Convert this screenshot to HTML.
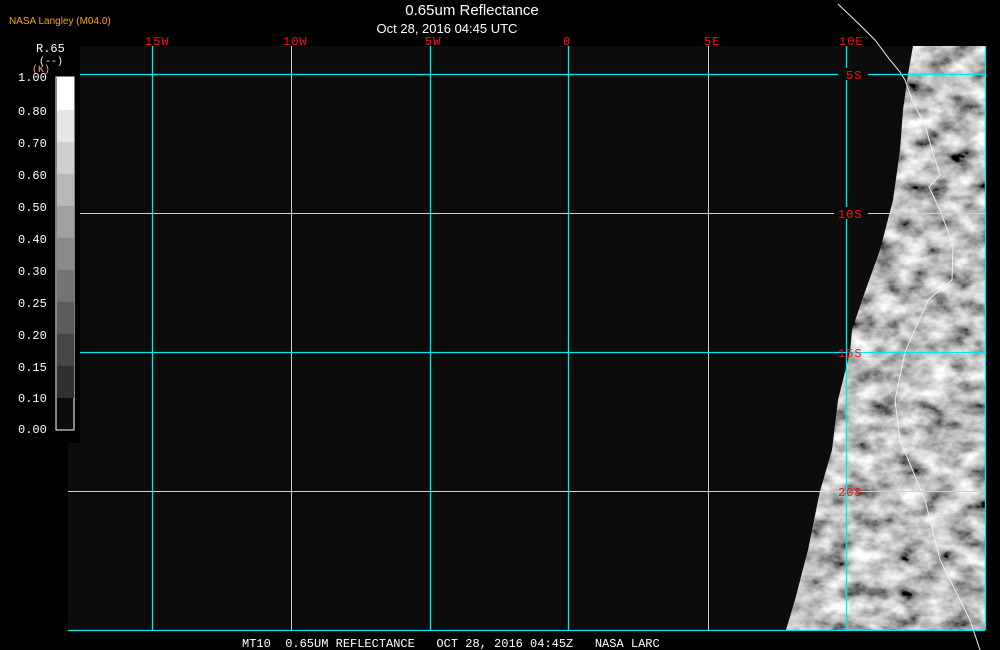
<!DOCTYPE html>
<html><head><style>
html,body{margin:0;padding:0;background:#000;width:1000px;height:650px;overflow:hidden}
svg{display:block}
.m{font-family:"Liberation Mono",monospace}
</style></head><body>
<svg width="1000" height="650" viewBox="0 0 1000 650" xmlns="http://www.w3.org/2000/svg">
<defs>
<filter id="cl" x="0" y="0" width="100%" height="100%">
<feTurbulence type="fractalNoise" baseFrequency="0.04 0.06" numOctaves="4" seed="7" result="t"/>
<feColorMatrix type="matrix" values="1.6 0 0 0 -0.28  1.6 0 0 0 -0.28  1.6 0 0 0 -0.28  0 0 0 0 1"/>
</filter>
<linearGradient id="eg" x1="0" y1="0" x2="1" y2="0">
<stop offset="0" stop-color="#fff" stop-opacity="0.4"/><stop offset="0.25" stop-color="#fff" stop-opacity="0"/>
</linearGradient>
<clipPath id="cp"><polygon points="913,46 908,74 903,110 900,150 893,200 880,250 862,300 852,330 850,352 838,400 832,450 820,491 808,550 795,600 786,630 985,630 985,46"/></clipPath>
</defs>
<rect x="80" y="46" width="905" height="584" fill="#0c0c0c"/>
<rect x="68" y="443" width="20" height="187" fill="#0c0c0c"/>
<g clip-path="url(#cp)"><rect x="780" y="46" width="205" height="584" fill="#999" filter="url(#cl)"/>
<rect x="780" y="46" width="205" height="584" fill="url(#eg)"/></g>
<polyline points="838,4 860,25 875,40 890,60 900,72 905,80 912,100 925,125 932,150 940,175 929,187 940,210 953,245 952,280 928,300 905,352 895,400 900,440 925,500 940,560 970,620 980,650" fill="none" stroke="#eee" stroke-width="1"/>
<g stroke="#d0d0d0" stroke-width="1">
<line x1="291.5" y1="46" x2="291.5" y2="630"/><line x1="708.5" y1="46" x2="708.5" y2="630"/>
<line x1="75" y1="213.5" x2="985" y2="213.5"/><line x1="68" y1="491.5" x2="985" y2="491.5"/>
</g>
<g stroke="#00e8f0" stroke-width="1.3">
<line x1="152.5" y1="46" x2="152.5" y2="630"/><line x1="430.5" y1="46" x2="430.5" y2="630"/>
<line x1="568.5" y1="46" x2="568.5" y2="630"/><line x1="846.5" y1="46" x2="846.5" y2="630"/>
<line x1="985.5" y1="46" x2="985.5" y2="630"/>
<line x1="68" y1="74.5" x2="985" y2="74.5"/><line x1="68" y1="352.5" x2="985" y2="352.5"/>
<line x1="68" y1="630.5" x2="985" y2="630.5"/>
</g>
<rect x="16" y="46" width="64" height="397" fill="#000"/>
<g class="m" font-size="12" fill="#ff1010" letter-spacing="1">
<text x="145" y="45">15W</text><text x="283" y="45">10W</text><text x="425" y="45">5W</text>
<text x="563" y="45">0</text><text x="704" y="45">5E</text><text x="839" y="45">10E</text>
<rect x="838" y="68" width="30" height="12" fill="#0c0c0c"/><text x="846" y="79">5S</text>
<rect x="834" y="207" width="34" height="12" fill="#0c0c0c"/><text x="838" y="218">10S</text>
<text x="838" y="357">15S</text><text x="838" y="496">20S</text>
</g>
<text x="9" y="24" font-family="Liberation Sans,sans-serif" font-size="10" fill="#ffa500">NASA Langley (M04.0)</text>
<text x="472" y="15" text-anchor="middle" font-family="Liberation Sans,sans-serif" font-size="15" fill="#fff">0.65um Reflectance</text>
<text x="447" y="33" text-anchor="middle" font-family="Liberation Sans,sans-serif" font-size="13" fill="#fff">Oct 28, 2016 04:45 UTC</text>
<g class="m" font-size="12" fill="#fff">
<text x="36" y="52">R.65</text><text x="39" y="64" font-size="10">(--)</text>
<text x="32" y="72" font-size="10" fill="#f0a080">(K)</text>
</g>
<g>
<rect x="56" y="77" width="18" height="353" fill="#0c0c0c" stroke="#fff" stroke-width="1"/>
<rect x="57" y="77" width="17" height="33" fill="#fff"/>
<rect x="57" y="110" width="17" height="32" fill="#e6e6e6"/>
<rect x="57" y="142" width="17" height="32" fill="#cfcfcf"/>
<rect x="57" y="174" width="17" height="32" fill="#b8b8b8"/>
<rect x="57" y="206" width="17" height="32" fill="#a0a0a0"/>
<rect x="57" y="238" width="17" height="32" fill="#8a8a8a"/>
<rect x="57" y="270" width="17" height="32" fill="#737373"/>
<rect x="57" y="302" width="17" height="32" fill="#5c5c5c"/>
<rect x="57" y="334" width="17" height="32" fill="#464646"/>
<rect x="57" y="366" width="17" height="32" fill="#303030"/>
</g>
<g class="m" font-size="12" fill="#fff">
<text x="18" y="81">1.00</text><text x="18" y="115">0.80</text><text x="18" y="147">0.70</text>
<text x="18" y="179">0.60</text><text x="18" y="211">0.50</text><text x="18" y="243">0.40</text>
<text x="18" y="275">0.30</text><text x="18" y="307">0.25</text><text x="18" y="339">0.20</text>
<text x="18" y="371">0.15</text><text x="18" y="402">0.10</text><text x="18" y="433">0.00</text>
</g>
<text x="242" y="647" class="m" font-size="12" fill="#fff" xml:space="preserve">MT10  0.65UM REFLECTANCE   OCT 28, 2016 04:45Z   NASA LARC</text>
</svg>
</body></html>
